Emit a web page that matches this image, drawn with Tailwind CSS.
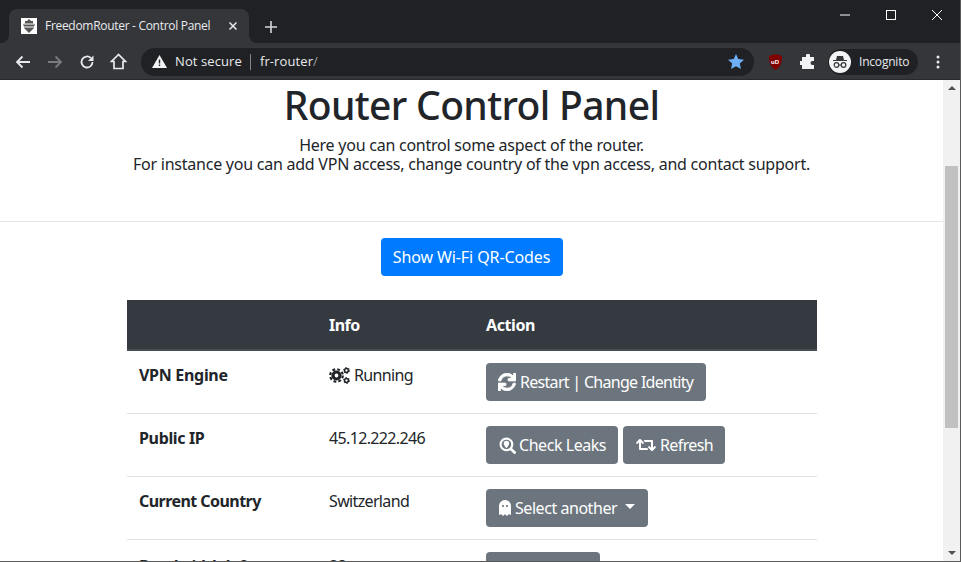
<!DOCTYPE html>
<html><head><meta charset="utf-8"><script src="https://cdn.jsdelivr.net/npm/@tailwindcss/browser@4"></script></head>
<body class="w-[961px] h-[562px] overflow-hidden bg-white font-['Noto_Sans',sans-serif] text-[#212529]">
<div class="h-[562px] flex flex-col border-r border-b border-[#5a5a5a]">
  <!-- tab strip -->
  <div class="h-[43px] shrink-0 bg-[#202124] flex items-end pl-[9px] relative">
    <div class="w-[240px] h-[34px] bg-[#35363a] rounded-t-[8px] flex items-center pl-[12px] text-[12px] text-[#e8eaed] font-['Open_Sans',sans-serif] relative">
      <svg class="absolute -left-[8px] bottom-0" width="8" height="8" viewBox="0 0 8 8"><path d="M8 0v8H0a8 8 0 0 0 8-8z" fill="#35363a"/></svg>
      <svg class="absolute -right-[8px] bottom-0" width="8" height="8" viewBox="0 0 8 8"><path d="M0 0v8h8a8 8 0 0 1-8-8z" fill="#35363a"/></svg>
      <span class="w-[16px] h-[16px] bg-white flex items-center justify-center mr-[8px]"><svg width="12" height="14" viewBox="0 0 12 14"><path d="M6 0l2 2h2v2l2 2-1 1v2l-2 2-1 1-2 2-2-2-1-1-2-2V7L0 6l2-2V2h2z" fill="#555"/><path d="M1 5h10M1 8h10" stroke="#fff"/></svg></span>
      <span class="tracking-[-0.3px]">FreedomRouter - Control Panel</span>
      <svg class="ml-[18px]" width="10" height="10" viewBox="0 0 10 10"><path d="M1.500 1.500l7 7M8.500 1.500l-7 7" stroke="#e8eaed" stroke-width="1.500"/></svg>
    </div>
    <svg class="ml-[15px] mb-[9px]" width="14" height="14" viewBox="0 0 14 14"><path d="M7 1v12M1 7h12" stroke="#d5d7da" stroke-width="1.600"/></svg>
    <div class="absolute top-[10px] right-[18px] flex items-center gap-[36px]">
      <svg width="10" height="10" viewBox="0 0 10 10"><path d="M0 5h10" stroke="#fff"/></svg>
      <svg width="10" height="10" viewBox="0 0 10 10"><rect x=".5" y=".5" width="9" height="9" fill="none" stroke="#fff"/></svg>
      <svg width="10" height="10" viewBox="0 0 10 10"><path d="M0 0l10 10M10 0L0 10" stroke="#fff"/></svg>
    </div>
  </div>
  <!-- toolbar -->
  <div class="h-[37px] shrink-0 bg-[#35363a] border-b border-[#28292c] flex items-center pt-[1px] font-['Open_Sans',sans-serif] text-[13px]">
    <svg class="ml-[15px]" width="16" height="14" viewBox="0 0 16 14"><path d="M15 7H2M7.500 1.500L2 7l5.500 5.500" fill="none" stroke="#e8eaed" stroke-width="1.800"/></svg>
    <svg class="ml-[16px]" width="16" height="14" viewBox="0 0 16 14"><path d="M1 7h13M8.500 1.500L14 7l-5.500 5.500" fill="none" stroke="#7b7c7f" stroke-width="1.800"/></svg>
    <svg class="ml-[16px]" width="16" height="16" viewBox="0 0 16 16"><path d="M13.500 8A5.500 5.500 0 1 1 11.800 4" fill="none" stroke="#e8eaed" stroke-width="1.800"/><path d="M14.500 1.500v5.500H9z" fill="#e8eaed"/></svg>
    <svg class="ml-[15px]" width="17" height="17" viewBox="0 0 17 17"><path d="M8.500 1.500L1.500 8.500h2.500v7h9v-7h2.500z" fill="none" stroke="#e8eaed" stroke-width="1.700"/></svg>
    <div class="ml-[14px] w-[613px] h-[28px] rounded-full bg-[#202124] flex items-center pl-[11px] relative">
      <svg width="15" height="13" viewBox="0 0 15 13"><path d="M7.500 0L15 13H0z" fill="#f1f3f4"/><path d="M7.500 4.500v4M7.500 9.500v1.500" stroke="#202124" stroke-width="1.400"/></svg>
      <span class="ml-[8px] text-[#e8eaed] tracking-[0.1px]">Not secure</span>
      <span class="ml-[8px] mr-[9px] w-px h-[16px] bg-[#80868b]"></span>
      <span class="text-[#e8eaed] tracking-[0.1px]">fr-router<span class="text-[#9aa0a6]">/</span></span>
      <svg class="absolute right-[10px] top-[6px]" width="16" height="15" viewBox="0 0 16 15"><path d="M8 0l2.300 5.100 5.700.6-4.200 3.800 1.200 5.500L8 12.200 3 15l1.200-5.500L0 5.700l5.700-.6z" fill="#6db0f5"/></svg>
    </div>
    <svg class="ml-[14px]" width="15" height="16" viewBox="0 0 15 16"><path d="M7.500 0L14 2c0 7-1.500 11-6.500 14C2.500 13 1 9 1 2z" fill="#800000"/><text x="3" y="10" font-size="6" font-weight="700" fill="#fff" font-family="Liberation Sans">uD</text></svg>
    <svg class="ml-[17px]" width="16" height="16" viewBox="0 0 16 16"><path d="M6 1.500a2 2 0 0 1 4 0V3h4v4h-1.500a2 2 0 0 0 0 4H14v4H2v-4H.8a2 2 0 0 1 0-4H2V3h4z" fill="#f1f3f4"/></svg>
    <div class="ml-[12px] w-[90px] h-[26px] rounded-full bg-[#202124] flex items-center pl-[1px]">
      <span class="w-[22px] h-[22px] rounded-full bg-[#f1f3f4] flex items-center justify-center"><svg width="16" height="14" viewBox="0 0 16 14"><path d="M4 5l1-4h6l1 4h3v1H1V5z" fill="#35363a"/><circle cx="4.500" cy="10" r="2.300" fill="none" stroke="#35363a" stroke-width="1.200"/><circle cx="11.500" cy="10" r="2.300" fill="none" stroke="#35363a" stroke-width="1.200"/><path d="M6.800 10h2.400" stroke="#35363a"/></svg></span>
      <span class="ml-[8px] text-[12px] text-[#e8eaed] tracking-[-0.2px]">Incognito</span>
    </div>
    <svg class="ml-[18px]" width="4" height="14" viewBox="0 0 4 14"><circle cx="2" cy="2" r="1.500" fill="#e8eaed"/><circle cx="2" cy="7" r="1.500" fill="#e8eaed"/><circle cx="2" cy="12" r="1.500" fill="#e8eaed"/></svg>
  </div>
  <!-- viewport -->
  <div class="flex-1 min-h-0 flex overflow-hidden">
    <main class="flex-1 min-w-0 overflow-hidden">
      <div class="h-[142px] border-b border-[#e5e5e5] text-center">
        <h1 class="text-[39px] leading-[48px] font-medium tracking-[-0.65px] pt-[1px]">Router Control Panel</h1>
        <p class="text-[16px] leading-[19px] mt-[7px] tracking-[-0.24px]">Here you can control some aspect of the router.<br>For instance you can add VPN access, change country of the vpn access, and contact support.</p>
      </div>
      <div class="flex justify-center mt-[16px]">
        <div class="h-[38px] w-[182px] justify-center rounded-[4px] bg-[#007bff] text-white text-[16px] tracking-[-0.1px] flex items-center">Show Wi-Fi QR-Codes</div>
      </div>
      <div class="mx-[127px] mt-[24px] text-[16px] w-[690px]">
        <div class="h-[51px] bg-[#343a40] border-b-2 border-[#454d55] text-white font-bold grid grid-cols-[202px_157px_1fr] items-center">
          <span></span><span class="tracking-[-0.5px]">Info</span><span class="tracking-[-0.4px]">Action</span>
        </div>
        <div class="h-[63px] border-b border-[#dee2e6] grid grid-cols-[202px_157px_1fr]">
          <b class="pl-[12px] pt-[12px] tracking-[-0.3px]">VPN Engine</b>
          <span class="pt-[12px] flex items-start gap-[4px] tracking-[-0.65px]"><svg class="mt-[4px]" width="21" height="17" viewBox="0 0 21 17" fill="none" stroke="#212529"><circle cx="7.500" cy="8.500" r="3.500" stroke-width="3.200"/><circle cx="7.500" cy="8.500" r="6.300" stroke-width="2.200" stroke-dasharray="2.800 2.150"/><circle cx="17.500" cy="3.500" r="1.900" stroke-width="1.500"/><circle cx="17.500" cy="3.500" r="3" stroke-width="1" stroke-dasharray="1.500 1.640"/><circle cx="17.500" cy="13.500" r="1.900" stroke-width="1.500"/><circle cx="17.500" cy="13.500" r="3" stroke-width="1" stroke-dasharray="1.500 1.640"/></svg>Running</span>
          <div class="pt-[12px]"><div class="inline-flex h-[38px] w-[220px] pl-[12px] items-center rounded-[4px] bg-[#6c757d] text-white gap-[4px] tracking-[-0.7px]"><svg width="18" height="18" viewBox="0 0 512 512"><path fill="#fff" stroke="#fff" stroke-width="24" d="M440.650 12.570l4 82.770A247.160 247.160 0 0 0 255.830 8C134.730 8 33.910 94.920 12.290 209.820A12 12 0 0 0 24.090 224h49.050a12 12 0 0 0 11.670-9.260 175.910 175.910 0 0 1 317-56.940l-101.460-4.860a12 12 0 0 0-12.570 12v47.410a12 12 0 0 0 12 12H500a12 12 0 0 0 12-12V12a12 12 0 0 0-12-12h-47.370a12 12 0 0 0-11.980 12.570zM255.830 432a175.610 175.610 0 0 1-146-77.800l101.800 4.870a12 12 0 0 0 12.570-12v-47.400a12 12 0 0 0-12-12H12a12 12 0 0 0-12 12V500a12 12 0 0 0 12 12h47.350a12 12 0 0 0 12-12.600l-4.150-82.570A247.170 247.170 0 0 0 255.830 504c121.110 0 221.930-86.920 243.550-201.820a12 12 0 0 0-11.800-14.180h-49.050a12 12 0 0 0-11.670 9.260A175.860 175.860 0 0 1 255.830 432z"/></svg>Restart | Change Identity</div></div>
        </div>
        <div class="h-[63px] border-b border-[#dee2e6] grid grid-cols-[202px_157px_1fr]">
          <b class="pl-[12px] pt-[12px] tracking-[-0.35px]">Public IP</b>
          <span class="pt-[12px] tracking-[-0.65px]">45.12.222.246</span>
          <div class="pt-[12px] flex gap-[5px]"><div class="inline-flex h-[38px] w-[132px] pl-[13px] items-center rounded-[4px] bg-[#6c757d] text-white gap-[3px] tracking-[-0.45px]"><svg width="17" height="17" viewBox="0 0 16 16"><circle cx="7" cy="7" r="5.500" fill="none" stroke="#fff" stroke-width="2"/><path d="M7 3.500a2.600 2.600 0 0 1 2.600 2.600C9.600 8 7 10.500 7 10.500S4.400 8 4.400 6.100A2.600 2.600 0 0 1 7 3.500z" fill="#fff"/><path d="M11 11l4.500 4.500" stroke="#fff" stroke-width="2.500"/></svg>Check Leaks</div><div class="inline-flex h-[38px] w-[102px] pl-[13px] items-center rounded-[4px] bg-[#6c757d] text-white gap-[4px] tracking-[-0.6px]"><svg width="20" height="16" viewBox="0 0 640 512"><path fill="#fff" d="M629.657 343.598L528.971 444.284c-9.373 9.372-24.568 9.372-33.941 0L394.343 343.598c-9.373-9.373-9.373-24.569 0-33.941l10.823-10.823c9.562-9.562 25.133-9.340 34.419.492L480 342.118V160H292.451a24.005 24.005 0 0 1-16.971-7.029l-16-16C244.361 121.851 255.069 96 276.451 96H520c13.255 0 24 10.745 24 24v222.118l40.416-42.792c9.285-9.831 24.856-10.054 34.419-.492l10.823 10.823c9.372 9.372 9.372 24.569-.001 33.941zm-265.138 15.431A23.999 23.999 0 0 0 347.548 352H160V169.881l40.416 42.792c9.286 9.831 24.856 10.054 34.419.491l10.822-10.822c9.373-9.373 9.373-24.569 0-33.941L144.971 67.716c-9.373-9.373-24.569-9.373-33.941 0L10.343 168.402c-9.373 9.373-9.373 24.569 0 33.941l10.822 10.822c9.562 9.562 25.133 9.340 34.419-.491L96 169.881V392c0 13.255 10.745 24 24 24h243.549c21.382 0 32.090-25.851 16.971-40.971l-16.001-16z"/></svg>Refresh</div></div>
        </div>
        <div class="h-[63px] border-b border-[#dee2e6] grid grid-cols-[202px_157px_1fr]">
          <b class="pl-[12px] pt-[12px] tracking-[-0.55px]">Current Country</b>
          <span class="pt-[12px] tracking-[-0.65px]">Switzerland</span>
          <div class="pt-[12px]"><div class="inline-flex h-[38px] w-[162px] pl-[13px] items-center rounded-[4px] bg-[#6c757d] text-white tracking-[-0.45px]"><svg class="mr-[4px]" width="12" height="16" viewBox="0 0 384 512"><path fill="#fff" d="M186.100.09C81.010 3.240 0 94.920 0 200.050v263.920c0 14.260 17.230 21.390 27.310 11.310l24.920-18.530c6.660-4.950 16-3.990 21.510 2.210l42.950 48.350c6.250 6.250 16.380 6.250 22.630 0l40.720-45.850c6.370-7.170 17.560-7.170 23.920 0l40.720 45.850c6.250 6.250 16.380 6.250 22.630 0l42.950-48.350c5.510-6.200 14.850-7.170 21.510-2.210l24.920 18.530c10.080 10.080 27.310 2.950 27.310-11.310V192C384 84 294.830-3.170 186.100.09zM128 224c-17.670 0-32-14.330-32-32s14.330-32 32-32 32 14.330 32 32-14.330 32-32 32zm128 0c-17.670 0-32-14.330-32-32s14.330-32 32-32 32 14.330 32 32-14.330 32-32 32z"/></svg>Select another<span class="ml-[8px] w-0 h-0 border-x-[5px] border-x-transparent border-t-[5px] border-t-white -mt-[3px]"></span></div></div>
        </div>
        <div class="h-[63px] grid grid-cols-[202px_157px_1fr]">
          <b class="pl-[12px] pt-[14px] tracking-[-0.4px]">Bandwidth left</b>
          <span class="pt-[14px] tracking-[-0.65px]">38ms</span>
          <div class="pt-[12px]"><div class="inline-flex h-[38px] w-[114px] justify-center items-center rounded-[4px] bg-[#6c757d] text-white tracking-[-0.45px]">Reset</div></div>
        </div>
      </div>
    </main>
    <aside class="w-[17px] shrink-0 bg-[#f1f1f1] flex flex-col items-center relative">
      <svg class="mt-[6px]" width="8" height="4" viewBox="0 0 8 4"><path d="M4 0l4 4H0z" fill="#505050"/></svg>
      <div class="absolute left-[2px] right-[2px] top-[86px] h-[262px] bg-[#c1c1c1]"></div>
      <svg class="absolute bottom-[6px]" width="8" height="4" viewBox="0 0 8 4"><path d="M4 4l4-4H0z" fill="#505050"/></svg>
    </aside>
  </div>
</div>
</body></html>
